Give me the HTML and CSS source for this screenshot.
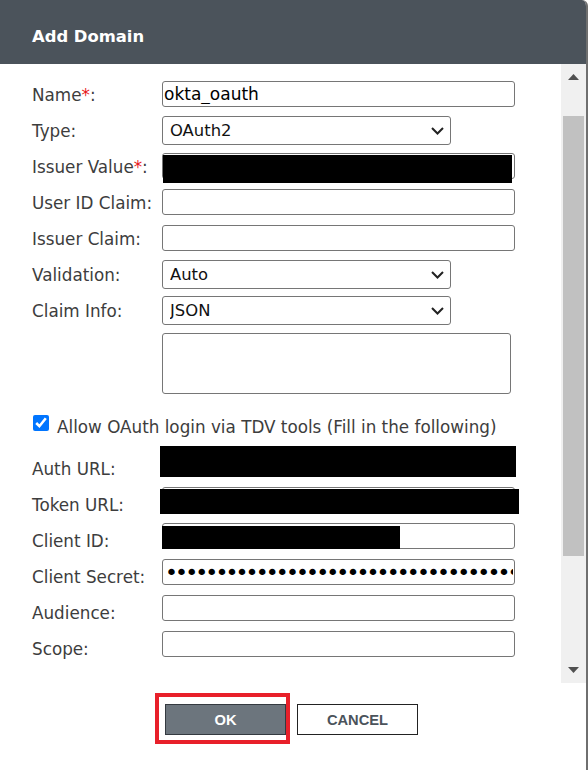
FILE: index.html
```html
<!DOCTYPE html>
<html lang="en">
<head>
<meta charset="utf-8">
<title>Add Domain</title>
<link rel="stylesheet" href="styles.css">
</head>
<body>
<div class="dialog">
  <div class="header"><h1 class="title">Add Domain</h1></div>
  <div class="body">
    <form class="form">
      <div class="row">
        <label class="label">Name<span class="req">*</span>:</label>
        <div class="control"><input class="text" type="text" value="okta_oauth"></div>
      </div>
      <div class="row">
        <label class="label">Type:</label>
        <div class="control sel">
          <select class="select"><option>OAuth2</option></select>
          <svg class="chev" width="13" height="8" viewBox="0 0 13 8"><polyline points="1,1 6.5,6.5 12,1" fill="none" stroke="#222" stroke-width="2"/></svg>
        </div>
      </div>
      <div class="row">
        <label class="label">Issuer Value<span class="req">*</span>:</label>
        <div class="control"><input class="text" type="text" value=""><span class="redact r-issuer"></span></div>
      </div>
      <div class="row">
        <label class="label">User ID Claim:</label>
        <div class="control"><input class="text" type="text"></div>
      </div>
      <div class="row">
        <label class="label">Issuer Claim:</label>
        <div class="control"><input class="text" type="text"></div>
      </div>
      <div class="row">
        <label class="label">Validation:</label>
        <div class="control sel">
          <select class="select"><option>Auto</option></select>
          <svg class="chev" width="13" height="8" viewBox="0 0 13 8"><polyline points="1,1 6.5,6.5 12,1" fill="none" stroke="#222" stroke-width="2"/></svg>
        </div>
      </div>
      <div class="row">
        <label class="label">Claim Info:</label>
        <div class="control sel">
          <select class="select"><option>JSON</option></select>
          <svg class="chev" width="13" height="8" viewBox="0 0 13 8"><polyline points="1,1 6.5,6.5 12,1" fill="none" stroke="#222" stroke-width="2"/></svg>
        </div>
      </div>
      <div class="area-row"><textarea class="area"></textarea></div>
      <div class="check-row">
        <input class="check" type="checkbox" checked id="allow">
        <label class="check-label" for="allow">Allow OAuth login via TDV tools (Fill in the following)</label>
      </div>
      <div class="row low">
        <label class="label">Auth URL:</label>
        <div class="control"><input class="text" type="text"><span class="redact r-auth"></span></div>
      </div>
      <div class="row low">
        <label class="label">Token URL:</label>
        <div class="control"><input class="text" type="text"><span class="redact r-token"></span></div>
      </div>
      <div class="row low">
        <label class="label">Client ID:</label>
        <div class="control"><input class="text" type="text"><span class="redact r-client"></span></div>
      </div>
      <div class="row low">
        <label class="label">Client Secret:</label>
        <div class="control"><input class="text pw" type="password" value="aaaaaaaaaaaaaaaaaaaaaaaaaaaaaaaaaaaaaaaaaaaaaaaaaaaaaaaaaaaa"></div>
      </div>
      <div class="row low">
        <label class="label">Audience:</label>
        <div class="control"><input class="text" type="text"></div>
      </div>
      <div class="row low">
        <label class="label">Scope:</label>
        <div class="control"><input class="text" type="text"></div>
      </div>
    </form>
    <div class="scrollbar">
      <div class="sb-arrow"><svg width="11" height="6" viewBox="0 0 11 6"><polygon points="5.5,0 11,6 0,6" fill="#505050"/></svg></div>
      <div class="sb-thumb"></div>
      <div class="sb-space"></div>
      <div class="sb-arrow"><svg width="11" height="6" viewBox="0 0 11 6"><polygon points="0,0 11,0 5.5,6" fill="#505050"/></svg></div>
    </div>
  </div>
  <div class="footer">
    <div class="focus-mark"><button class="btn btn-ok" type="button">OK</button></div>
    <button class="btn btn-cancel" type="button">CANCEL</button>
  </div>
</div>
</body>
</html>
```
FILE: styles.css
```css
html, body {
  margin: 0;
  padding: 0;
  background: #ffffff;
}

.dialog {
  width: 586px;
  height: 770px;
  border-right: 2px solid #6f6f6f;
  border-top-right-radius: 6px;
  overflow: hidden;
  display: flex;
  flex-direction: column;
  background: #ffffff;
}

.header {
  height: 64px;
  flex: none;
  box-sizing: border-box;
  background: #4b535b;
  padding: 8px 0 0 32px;
  display: flex;
  align-items: center;
}

.title {
  margin: 0;
  font-family: "DejaVu Sans", Verdana, sans-serif;
  font-weight: 700;
  font-size: 16.4px;
  color: #ffffff;
}

.body {
  height: 619px;
  flex: none;
  display: flex;
}

.form {
  flex: 1;
  margin: 0;
  padding: 12px 0 0 32px;
  font-family: "DejaVu Sans", Verdana, sans-serif;
}

.row {
  height: 36px;
  display: flex;
  align-items: center;
}

.label {
  width: 130px;
  flex: none;
  font-size: 16.8px;
  color: #3d3d3d;
  padding-top: 2px;
  white-space: nowrap;
}

.row.low .label {
  padding-top: 9px;
}

.req {
  color: #e8161b;
}

.control {
  position: relative;
  display: flex;
}

.text {
  box-sizing: border-box;
  width: 353px;
  height: 26px;
  margin: 0;
  padding: 0 1px;
  border: 1px solid #767676;
  border-radius: 3px;
  font-family: "DejaVu Sans", Verdana, sans-serif;
  font-size: 17px;
  color: #000;
  background: #fff;
}

.pw {
  font-size: 22px;
  letter-spacing: -2.9px;
  padding-left: 2px;
}

.select {
  box-sizing: border-box;
  width: 289px;
  height: 29px;
  margin: 0;
  padding: 0 0 0 7px;
  border: 1px solid #767676;
  border-radius: 3px;
  appearance: none;
  -webkit-appearance: none;
  background: #fff;
  font-family: "DejaVu Sans", Verdana, sans-serif;
  font-size: 16.4px;
  color: #111;
}

.chev {
  position: absolute;
  right: 7px;
  top: 11px;
  pointer-events: none;
}

.redact {
  position: absolute;
  background: #000;
}

.r-issuer { left: 1px; top: 2px; width: 349px; height: 28px; }
.r-auth { left: -2px; top: -5px; width: 356px; height: 31px; }
.r-token { left: -2px; top: 2px; width: 359px; height: 25px; }
.r-client { left: 0; top: 3px; width: 238px; height: 23px; }

.area-row {
  padding: 5px 0 0 130px;
  display: flex;
}

.area {
  box-sizing: border-box;
  width: 349px;
  height: 61px;
  margin: 0;
  border: 1px solid #767676;
  border-radius: 3px;
  resize: none;
}

.check-row {
  height: 36px;
  margin: 14px 0 2px;
  display: flex;
  align-items: center;
}

.check {
  width: 16px;
  height: 16px;
  margin: 0 8px 6px 1px;
  accent-color: #0075ff;
}

.check-label {
  font-size: 16.8px;
  color: #3d3d3d;
  padding-top: 2px;
}

.scrollbar {
  width: 25px;
  flex: none;
  background: #f0f0f0;
  display: flex;
  flex-direction: column;
  align-items: center;
}

.sb-arrow {
  height: 26px;
  flex: none;
  display: flex;
  align-items: center;
  justify-content: center;
}

.sb-thumb {
  width: 21px;
  height: 440px;
  margin-top: 26px;
  background: #c1c1c1;
}

.sb-space {
  flex: 1;
}

.footer {
  flex: 1;
  display: flex;
  justify-content: center;
  align-items: flex-start;
  padding: 10px 13px 0 0;
}

.focus-mark {
  border: 4px solid #e8202a;
  padding: 7px 0 5px 6px;
  display: flex;
}

.btn {
  box-sizing: border-box;
  height: 31px;
  margin: 0;
  padding: 0;
  font-family: "Liberation Sans", Arial, sans-serif;
  font-weight: 700;
  font-size: 14.7px;
}

.btn-ok {
  width: 121px;
  background: #6c757d;
  color: #ffffff;
  border: 1px solid #343a40;
}

.btn-cancel {
  width: 121px;
  margin: 11px 0 0 7px;
  background: #ffffff;
  color: #4b535b;
  border: 1px solid #222222;
}
```
